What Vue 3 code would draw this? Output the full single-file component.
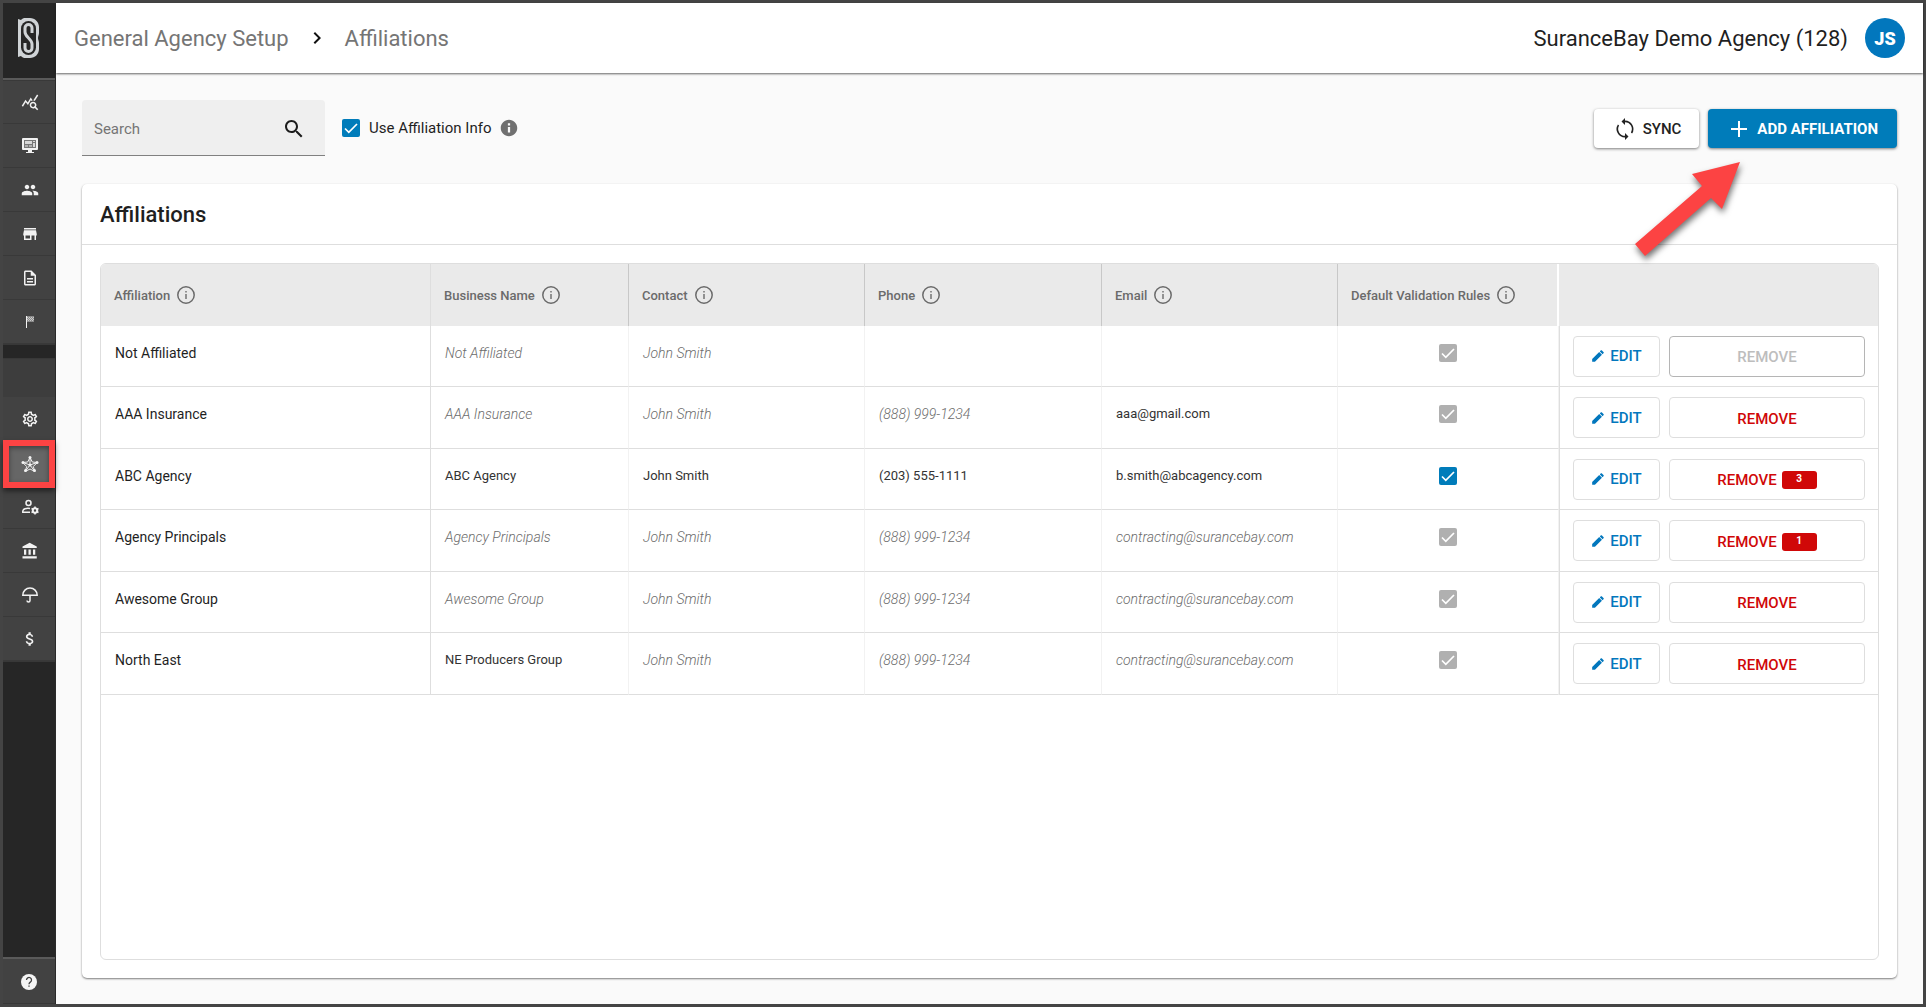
<script setup>
import { ref } from 'vue'

const search = ref('')
const useInfo = ref(true)

const paths = {
  stats: 'M19.88 18.47c.44-.7.7-1.51.7-2.39 0-2.49-2.01-4.5-4.5-4.5s-4.5 2.01-4.5 4.5 2.01 4.5 4.49 4.5c.88 0 1.7-.26 2.39-.7L21.58 23 23 21.58l-3.12-3.11zm-3.8.11c-1.38 0-2.5-1.12-2.5-2.5s1.12-2.5 2.5-2.5 2.5 1.12 2.5 2.5-1.12 2.5-2.5 2.5zm-.36-8.5c-.74.02-1.45.18-2.1.45l-.55-.83-3.8 6.18-3.01-3.52-3.63 5.81L1 17l5-8 3 3.5L13 6l2.72 4.08zm2.59.5c-.64-.28-1.33-.45-2.05-.49L21.38 2 23 3.18l-4.69 7.4z',
  group: 'M16 11c1.66 0 2.99-1.34 2.99-3S17.66 5 16 5c-1.66 0-3 1.34-3 3s1.34 3 3 3zm-8 0c1.66 0 2.99-1.34 2.99-3S9.66 5 8 5C6.34 5 5 6.34 5 8s1.34 3 3 3zm0 2c-2.33 0-7 1.17-7 3.5V19h14v-2.5c0-2.33-4.67-3.5-7-3.5zm8 0c-.29 0-.62.02-.97.05 1.16.84 1.97 1.97 1.97 3.45V19h6v-2.5c0-2.33-4.67-3.5-7-3.5z',
  store: 'M20 4H4v2h16V4zm1 10v-2l-1-5H4l-1 5v2h1v6h10v-6h4v6h2v-6h1zm-9 4H6v-4h6v4z',
  doc: 'M8 16h8v2H8zm0-4h8v2H8zm6-10H6c-1.1 0-2 .9-2 2v16c0 1.1.89 2 1.99 2H18c1.1 0 2-.9 2-2V8l-6-6zm4 18H6V4h7v5h5v11z',
  gear: 'M19.43 12.98c.04-.32.07-.64.07-.98 0-.34-.03-.66-.07-.98l2.11-1.65c.19-.15.24-.42.12-.64l-2-3.46c-.09-.16-.26-.25-.44-.25-.06 0-.12.01-.17.03l-2.49 1c-.52-.4-1.08-.73-1.69-.98l-.38-2.65C14.46 2.18 14.25 2 14 2h-4c-.25 0-.46.18-.49.42l-.38 2.65c-.61.25-1.17.59-1.69.98l-2.49-1c-.06-.02-.12-.03-.18-.03-.17 0-.34.09-.43.25l-2 3.46c-.13.22-.07.49.12.64l2.11 1.65c-.04.32-.07.65-.07.98 0 .33.03.66.07.98l-2.11 1.65c-.19.15-.24.42-.12.64l2 3.46c.09.16.26.25.44.25.06 0 .12-.01.17-.03l2.49-1c.52.4 1.08.73 1.69.98l.38 2.65c.03.24.24.42.49.42h4c.25 0 .46-.18.49-.42l.38-2.65c.61-.25 1.17-.59 1.69-.98l2.49 1c.06.02.12.03.18.03.17 0 .34-.09.43-.25l2-3.46c.12-.22.07-.49-.12-.64l-2.11-1.65zm-1.98-1.71c.04.31.05.52.05.73 0 .21-.02.43-.05.73l-.14 1.13.89.7 1.08.84-.7 1.21-1.27-.51-1.04-.42-.9.68c-.43.32-.84.56-1.25.73l-1.06.43-.16 1.13-.2 1.35h-1.4l-.19-1.35-.16-1.13-1.06-.43c-.43-.18-.83-.41-1.23-.71l-.91-.7-1.06.43-1.27.51-.7-1.21 1.08-.84.89-.7-.14-1.13c-.03-.31-.05-.54-.05-.74s.02-.43.05-.73l.14-1.13-.89-.7-1.08-.84.7-1.21 1.27.51 1.04.42.9-.68c.43-.32.84-.56 1.25-.73l1.06-.43.16-1.13.2-1.35h1.39l.19 1.35.16 1.13 1.06.43c.43.18.83.41 1.23.71l.91.7 1.06-.43 1.27-.51.7 1.21-1.07.85-.89.7.14 1.13zM12 8c-2.21 0-4 1.79-4 4s1.79 4 4 4 4-1.79 4-4-1.79-4-4-4zm0 6c-1.1 0-2-.9-2-2s.9-2 2-2 2 .9 2 2-.9 2-2 2z',
  bank: 'M4 10v7h3v-7H4zm6 0v7h3v-7h-3zM2 22h19v-3H2v3zm14-12v7h3v-7h-3zm-4.5-9L2 6v2h19V6l-9.5-5z',
  money: 'M11.8 10.9c-2.27-.59-3-1.2-3-2.15 0-1.09 1.01-1.85 2.7-1.85 1.78 0 2.44.85 2.5 2.1h2.21c-.07-1.72-1.12-3.3-3.21-3.81V3h-3v2.16c-1.94.42-3.5 1.68-3.5 3.61 0 2.31 1.91 3.46 4.7 4.13 2.5.6 3 1.48 3 2.41 0 .69-.49 1.79-2.7 1.79-2.06 0-2.87-.92-2.98-2.1h-2.2c.12 2.19 1.76 3.42 3.68 3.83V21h3v-2.15c1.95-.37 3.5-1.5 3.5-3.55 0-2.84-2.43-3.81-4.7-4.4z',
}

const topNav = [
  { id: 'stats', label: 'Reports', d: paths.stats },
  { id: 'screen', label: 'Dashboard' },
  { id: 'group', label: 'Producers', d: paths.group },
  { id: 'store', label: 'Store', d: paths.store },
  { id: 'doc', label: 'Documents', d: paths.doc },
  { id: 'flag', label: 'Milestones' },
]
const setupNav = [
  { id: 'gear', label: 'Settings', d: paths.gear },
  { id: 'star', label: 'Affiliations', active: true },
  { id: 'user', label: 'User management' },
  { id: 'bank', label: 'Carriers', d: paths.bank },
  { id: 'umbrella', label: 'Insurance' },
  { id: 'money', label: 'Commissions', d: paths.money },
]

const columns = ['Affiliation', 'Business Name', 'Contact', 'Phone', 'Email', 'Default Validation Rules']

// Cells with def: true show an inherited default value in italics.
const own = (text) => ({ text, def: false })
const def = (text) => ({ text, def: true })
const rows = [
  { name: 'Not Affiliated', cells: [def('Not Affiliated'), def('John Smith'), own(''), own('')], rules: false, locked: true },
  { name: 'AAA Insurance', cells: [def('AAA Insurance'), def('John Smith'), def('(888) 999-1234'), own('aaa@gmail.com')], rules: false },
  { name: 'ABC Agency', cells: [own('ABC Agency'), own('John Smith'), own('(203) 555-1111'), own('b.smith@abcagency.com')], rules: true, count: 3 },
  { name: 'Agency Principals', cells: [def('Agency Principals'), def('John Smith'), def('(888) 999-1234'), def('contracting@surancebay.com')], rules: false, count: 1 },
  { name: 'Awesome Group', cells: [def('Awesome Group'), def('John Smith'), def('(888) 999-1234'), def('contracting@surancebay.com')], rules: false },
  { name: 'North East', cells: [own('NE Producers Group'), def('John Smith'), def('(888) 999-1234'), def('contracting@surancebay.com')], rules: false },
]
</script>

<template>
  <div class="app">
    <aside class="sidebar">
      <a href="#" class="logo" aria-label="Home">
        <svg width="24" height="42" viewBox="0 0 24 42">
          <path d="M1 2l3 1 1-1 2-1h6c5 0 9 4 9 9v6c0 2-1 3-1 5s1 3 1 5v6c0 5-4 9-9 9H7l-2-1-1-1-3 1z" fill="#cfd3d6" />
          <rect x="4" y="4" width="15" height="34" rx="7.500" fill="#262626" />
          <path d="M15 16v-5a3.500 3.500 0 0 0-7 0v4c0 5 7 7 7 12v4a3.500 3.500 0 0 1-7 0v-5" fill="none" stroke="#cfd3d6" stroke-width="3" />
        </svg>
      </a>
      <nav class="group">
        <a v-for="n in topNav" :key="n.id" href="#" class="item" :aria-label="n.label">
          <svg v-if="n.d" width="18" height="18" viewBox="0 0 24 24"><path :d="n.d" fill="#f2f2f2" /></svg>
          <svg v-else-if="n.id === 'screen'" width="18" height="18" viewBox="0 0 18 18">
            <path d="M2 1h14a1 1 0 0 1 1 1v10a1 1 0 0 1-1 1h-5v2h2v1H5v-1h2v-2H2a1 1 0 0 1-1-1V2a1 1 0 0 1 1-1z" fill="#f2f2f2" />
            <path d="M3 3h12v8H3z" fill="#777" />
            <path d="M4 4h7v3H4zM12 4h2v1h-2zM12 6h2v4h-2z" fill="#d8d8d8" />
            <path d="M4 8h3v2H4zM8 8h3v2H8z" fill="#b0b0b0" />
          </svg>
          <svg v-else width="18" height="18" viewBox="0 0 18 18">
            <path d="M5 3h1v12H5z" fill="#f2f2f2" />
            <path d="M6 3h7v6H6z" fill="#8a8a8a" />
            <path d="M6 4h1v1H6zM8 4h1v1H8zM10 4h1v1h-1zM12 4h1v1h-1zM7 5h1v1H7zM9 5h1v1H9zM11 5h1v1h-1zM6 6h1v1H6zM8 6h1v1H8zM10 6h1v1h-1zM12 6h1v1h-1zM7 7h1v1H7zM9 7h1v1H9zM11 7h1v1h-1z" fill="#c8c8c8" />
          </svg>
        </a>
      </nav>
      <nav class="group second">
        <div class="spacer"></div>
        <a v-for="n in setupNav" :key="n.id" href="#" class="item" :class="{ active: n.active }" :aria-label="n.label">
          <svg v-if="n.d" width="18" height="18" viewBox="0 0 24 24"><path :d="n.d" fill="#f2f2f2" /></svg>
          <svg v-else-if="n.id === 'star'" width="18" height="18" viewBox="0 0 18 18" fill="none" stroke="#f2f2f2">
            <path d="M9 2v8M2 7.500l7 2.500M16 7.500l-7 2.500M4.500 16L9 10l4.500 6" />
            <path d="M9 2.500l2.300 4.500 5 .5-4 4 1.500 5L9 14l-4.800 2.500 1.500-5-4-4 5-.5z" stroke-width="1" />
            <g fill="#f2f2f2" stroke="none"><circle cx="9" cy="2.500" r="1.500" /><circle cx="2" cy="7.500" r="1.500" /><circle cx="16" cy="7.500" r="1.500" /><circle cx="4.500" cy="15.500" r="1.500" /><circle cx="13.500" cy="15.500" r="1.500" /><circle cx="9" cy="10" r="1.500" /></g>
          </svg>
          <svg v-else-if="n.id === 'user'" width="18" height="18" viewBox="0 0 18 18" fill="none" stroke="#f2f2f2" stroke-width="1.500">
            <circle cx="7.500" cy="5" r="2.500" />
            <path d="M9 10.500c-4-.5-7 .5-7.200 2.500v1.300H9" />
            <circle cx="14" cy="12.500" r="2.200" stroke-width="2" />
            <path d="M14 8.500v2M14 14.500v2M10.500 10.500l2 1M15.500 13.500l2 1M10.500 14.500l2-1M15.500 11.500l2-1" />
          </svg>
          <svg v-else width="18" height="18" viewBox="0 0 18 18" fill="none" stroke="#f2f2f2" stroke-width="1.500">
            <path d="M1.800 9.200c0-4 3.200-7.200 7.200-7.200s7.200 3.200 7.200 7.200zM9 9v5.500a1.500 1.500 0 0 1-3 0" />
          </svg>
        </a>
      </nav>
      <a href="#" class="help" aria-label="Help">
        <svg width="18" height="18" viewBox="0 0 18 18">
          <circle cx="9" cy="9" r="8" fill="#f5f5f5" />
          <path d="M6.500 7a2.500 2.500 0 1 1 3.800 2.100C9.300 9.700 9 10 9 11.200M9 12.500v1.300" fill="none" stroke="#3f3f3f" stroke-width="1.300" />
        </svg>
      </a>
    </aside>

    <div class="content">
      <header class="topbar">
        <div class="crumbs">
          <a href="#">General Agency Setup</a>
          <svg width="24" height="24" viewBox="0 0 24 24"><path d="M10 6L8.590 7.410 13.170 12l-4.580 4.590L10 18l6-6z" fill="#111" /></svg>
          <a href="#">Affiliations</a>
        </div>
        <div class="account">
          <span>SuranceBay Demo Agency (128)</span>
          <button class="avatar">JS</button>
        </div>
      </header>

      <main class="main">
        <div class="toolbar">
          <div class="search">
            <input v-model="search" type="text" placeholder="Search" aria-label="Search" />
            <svg width="24" height="24" viewBox="0 0 24 24"><path d="M15.500 14h-.79l-.28-.27C15.410 12.590 16 11.110 16 9.500 16 5.910 13.090 3 9.500 3S3 5.910 3 9.500 5.910 16 9.500 16c1.610 0 3.090-.59 4.230-1.570l.27.28v.79l5 4.990L20.490 19l-4.990-5zm-6 0C7.010 14 5 11.990 5 9.500S7.010 5 9.500 5 14 7.010 14 9.500 11.990 14 9.500 14z" fill="#1c1c1c" /></svg>
          </div>
          <label class="use">
            <input v-model="useInfo" type="checkbox" class="check on" />
            <span>Use Affiliation Info</span>
            <svg width="18" height="18" viewBox="0 0 24 24"><path d="M12 1C5.900 1 1 5.900 1 12s4.900 11 11 11 11-4.900 11-11S18.100 1 12 1zm1.500 17h-3v-7.500h3V18zm0-9.500h-3v-3h3v3z" fill="#707070" /></svg>
          </label>
          <div class="actions">
            <button class="btn sync">
              <svg width="24" height="24" viewBox="0 0 24 24"><path d="M12 3.500V1L8.500 4.500 12 8V5.200a6.800 6.800 0 0 1 5.900 10.200l1.200 1.200A8.500 8.500 0 0 0 12 3.500zM12 18.800A6.800 6.800 0 0 1 6.100 8.600L4.900 7.400A8.500 8.500 0 0 0 12 20.500V23l3.500-3.500L12 16z" fill="#222" /></svg>
              SYNC
            </button>
            <button class="btn add">
              <svg width="24" height="24" viewBox="0 0 24 24"><path d="M20 13h-7v7h-2v-7H4v-2h7V4h2v7h7v2z" fill="#fff" /></svg>
              ADD AFFILIATION
            </button>
          </div>
        </div>

        <section class="card">
          <h2>Affiliations</h2>
          <div class="panel">
            <table>
              <colgroup>
                <col class="c1" /><col class="c2" /><col class="c3" /><col class="c4" /><col class="c3" /><col class="c5" /><col class="c6" />
              </colgroup>
              <thead>
                <tr>
                  <th v-for="c in columns" :key="c" scope="col">
                    <div class="head">
                      {{ c }}
                      <svg width="20" height="20" viewBox="0 0 20 20"><circle cx="10" cy="10" r="8.200" fill="none" stroke="#6b6b6b" stroke-width="1.500" /><path d="M9.300 9h1.400v5H9.300zM9.300 6h1.400v1.500H9.300z" fill="#6b6b6b" /></svg>
                    </div>
                  </th>
                  <th aria-label="Actions"></th>
                </tr>
              </thead>
              <tbody>
                <tr v-for="r in rows" :key="r.name">
                  <td class="name">{{ r.name }}</td>
                  <td v-for="(c, i) in r.cells" :key="i" :class="{ def: c.def }">{{ c.text }}</td>
                  <td class="rule"><input type="checkbox" checked class="check" :class="{ on: r.rules }" :aria-label="'Default validation rules for ' + r.name" /></td>
                  <td class="ops">
                    <div class="pair">
                      <button class="edit">
                        <svg width="14" height="14" viewBox="0 0 24 24"><path d="M2 17.250V22h4.750L18.810 9.940l-4.750-4.750L2 17.250zM21.710 7.040c.39-.39.39-1.020 0-1.410l-3.340-3.340c-.39-.39-1.020-.39-1.410 0l-1.830 1.830 4.750 4.750 1.830-1.830z" fill="#0277bd" /></svg>
                        EDIT
                      </button>
                      <button class="remove" :disabled="r.locked">
                        REMOVE
                        <span v-if="r.count" class="badge">{{ r.count }}</span>
                      </button>
                    </div>
                  </td>
                </tr>
              </tbody>
            </table>
          </div>
        </section>

        <svg class="pointer" width="130" height="120" viewBox="0 0 130 120">
          <path d="M115 12L67 24l10 12L10 94l10 12L86 48l11 11z" fill="#fc4343" />
        </svg>
      </main>
    </div>
  </div>
</template>

<style>
html,
body {
  margin: 0;
  background: #fafafa;
}
</style>

<style scoped>
.app {
  box-sizing: border-box;
  min-height: 100vh;
  display: flex;
  border: 3px solid #444;
  font-family: Roboto, "Liberation Sans", sans-serif;
  color: #1f1f1f;
  background: #fafafa;
}
button,
input {
  font-family: inherit;
  margin: 0;
}
button {
  cursor: pointer;
}
a {
  color: inherit;
  text-decoration: none;
}
svg {
  display: block;
  flex: none;
}

.sidebar {
  flex: none;
  width: 52px;
  display: flex;
  flex-direction: column;
  background: #262626;
  border-right: 1px solid #2a2a2a;
}
.logo {
  height: 75px;
  box-sizing: border-box;
  padding-top: 14px;
  display: flex;
  justify-content: center;
  align-items: flex-start;
}
.group {
  border-top: 2px solid #5a5a5a;
  background: #424242;
  border-bottom: 1px solid #383838;
}
.group.second {
  margin-top: 13px;
  border-top: 1px solid #383838;
}
.spacer {
  height: 38px;
  background: #3d3d3d;
}
.item {
  box-sizing: border-box;
  height: 44px;
  padding-left: 2px;
  display: flex;
  align-items: center;
  justify-content: center;
  border-bottom: 1px solid #393939;
}
.item:first-child {
  border-top: 1px solid #393939;
}
.item.active {
  position: relative;
  height: 48px;
  margin: -1px 0 -3px;
  border: 6px solid #fc4343;
  background: #666;
  box-shadow: 0 3px 5px rgba(0, 0, 0, 0.5), inset 0 2px 5px rgba(0, 0, 0, 0.4);
}
.help {
  margin-top: auto;
  height: 43px;
  padding-top: 1px;
  display: flex;
  align-items: center;
  justify-content: center;
  background: #424242;
  border-top: 2px solid #5a5a5a;
  border-bottom: 1px solid #383838;
}

.content {
  flex: 1;
  min-width: 0;
  display: flex;
  flex-direction: column;
}
.topbar {
  box-sizing: border-box;
  height: 70px;
  display: flex;
  align-items: center;
  justify-content: space-between;
  padding: 0 18px;
  background: #fff;
  box-shadow: 0 1px 2px rgba(0, 0, 0, 0.6);
}
.crumbs,
.account {
  display: flex;
  align-items: center;
  font-size: 22px;
  line-height: 32px;
}
.crumbs {
  gap: 16px;
  color: #757575;
}
.crumbs a,
.account span {
  padding-top: 1px;
}
.account {
  gap: 17px;
}
.avatar {
  width: 40px;
  height: 40px;
  padding: 0;
  border: 0;
  border-radius: 50%;
  background: #0277bd;
  color: #fff;
  font-size: 18px;
  font-weight: 900;
}

.main {
  position: relative;
  flex: 1;
  display: flex;
  flex-direction: column;
  padding: 27px 26px 26px;
}
.toolbar {
  display: flex;
  align-items: center;
  margin-bottom: 28px;
}
.search {
  box-sizing: border-box;
  width: 243px;
  height: 56px;
  display: flex;
  align-items: center;
  padding: 2px 19px 0 12px;
  background: #efefef;
  border-bottom: 1px solid #808080;
  border-radius: 4px 4px 0 0;
}
.search input {
  flex: 1;
  min-width: 0;
  padding: 0;
  border: 0;
  outline: 0;
  background: none;
  font-size: 15px;
  color: #1f1f1f;
}
.search input::placeholder {
  color: #757575;
}
.use {
  display: flex;
  align-items: center;
  margin-left: 17px;
  font-size: 15px;
}
.use span {
  margin: 0 9px;
}
.check {
  appearance: none;
  flex: none;
  display: block;
  width: 18px;
  height: 18px;
  border-radius: 2px;
  background: #b0b0b0;
}
.check.on {
  background: #007cba;
}
.check:checked {
  background-image: url("data:image/svg+xml,%3Csvg xmlns='http://www.w3.org/2000/svg' viewBox='0 0 18 18'%3E%3Cpath d='M3 9.500l3.800 3.800L15 5' fill='none' stroke='white' stroke-width='1.700'/%3E%3C/svg%3E");
}
.actions {
  margin-left: auto;
  display: flex;
  gap: 9px;
}
.btn {
  height: 39px;
  display: flex;
  align-items: center;
  gap: 6px;
  border: 0;
  border-radius: 4px;
  box-shadow: 0 1px 3px rgba(0, 0, 0, 0.5);
  font-size: 15px;
  font-weight: 500;
}
.sync {
  padding: 1px 18px 0 19px;
  background: #fff;
  color: #222;
}
.add {
  padding: 1px 19px 0;
  background: #007cba;
  color: #fff;
  font-weight: 700;
}

.card {
  flex: 1;
  display: flex;
  flex-direction: column;
  background: #fff;
  border-radius: 5px;
  box-shadow: 0 1px 2px rgba(0, 0, 0, 0.5);
}
h2 {
  margin: 0;
  padding: 2px 18px 0;
  font-size: 22px;
  font-weight: 500;
  line-height: 58px;
  border-bottom: 1px solid #dedede;
}
.panel {
  flex: 1;
  margin: 18px;
  border: 1px solid #dedede;
  border-radius: 6px;
  overflow: hidden;
}
table {
  width: 100%;
  table-layout: fixed;
  border-collapse: separate;
  border-spacing: 0;
}
.c1 { width: 330px; }
.c2 { width: 198px; }
.c3 { width: 236px; }
.c4 { width: 237px; }
.c5 { width: 221px; }
.c6 { width: 320px; }
th {
  box-sizing: border-box;
  height: 62px;
  padding: 0 13px;
  background: #eaeaea;
  border-right: 1px solid #c8c8c8;
  color: #6b6b6b;
  font-size: 13px;
  font-weight: 500;
  text-align: left;
}
th:first-child {
  border-right-color: #dedede;
}
th:nth-child(6) {
  border-right: 2px solid #fff;
}
th:last-child {
  border-right: 0;
}
.head {
  display: flex;
  align-items: center;
  gap: 6px;
  white-space: nowrap;
}
td {
  box-sizing: border-box;
  height: 61px;
  padding: 18px 14px 0;
  vertical-align: top;
  border-right: 1px solid #f2f2f2;
  border-bottom: 1px solid #dedede;
  font-size: 13px;
  line-height: 18px;
  color: #333;
}
tr:nth-child(even) td {
  height: 62px;
}
td.name {
  font-size: 14px;
  color: #1f1f1f;
  border-right-color: #dedede;
}
td.def {
  font-size: 14px;
  font-style: italic;
  font-weight: 300;
  color: #6b6b6b;
}
td.rule .check {
  margin: 0 auto;
}
td.ops {
  padding: 0 14px 0 13px;
  border-right: 0;
  border-left: 1px solid #dedede;
  vertical-align: middle;
}
.pair {
  display: flex;
  gap: 9px;
}
.pair button {
  box-sizing: border-box;
  height: 41px;
  display: flex;
  align-items: center;
  justify-content: center;
  gap: 5px;
  padding: 0;
  background: #fff;
  border: 1px solid #dedede;
  border-radius: 4px;
  font-size: 15px;
  font-weight: 500;
}
.pair .edit {
  width: 87px;
  color: #0277bd;
}
.pair .remove {
  flex: 1;
  padding-top: 2px;
  color: #d00808;
}
.pair .remove:disabled {
  border-color: #b5b5b5;
  color: #bdbdbd;
}
.badge {
  width: 35px;
  height: 18px;
  border-radius: 3px;
  background: #d00808;
  color: #fff;
  font-size: 10px;
  font-weight: 700;
  line-height: 16px;
}
.pointer {
  position: absolute;
  top: 77px;
  right: 168px;
  filter: drop-shadow(1px 4px 3px rgba(0, 0, 0, 0.55));
}
</style>
